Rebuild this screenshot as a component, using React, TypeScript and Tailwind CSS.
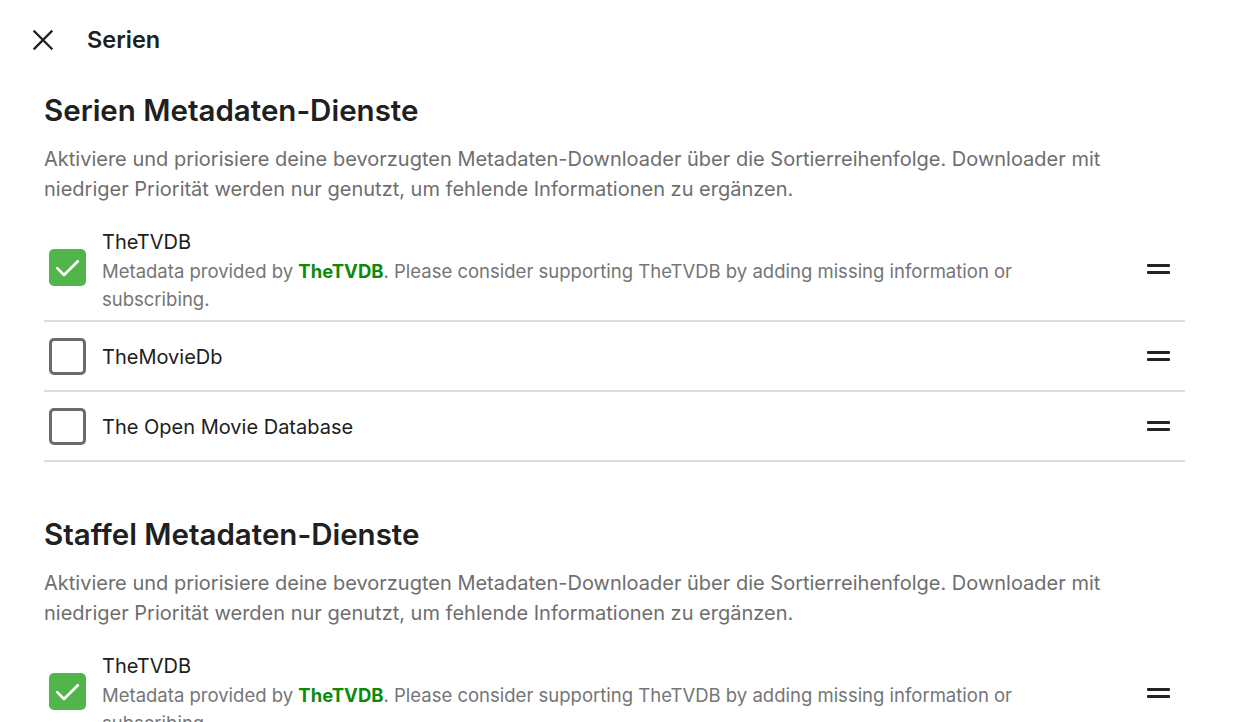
type Provider = { name: string; checked: boolean; tvdb?: boolean }

const PROVIDERS: Provider[] = [
  { name: 'TheTVDB', checked: true, tvdb: true },
  { name: 'TheMovieDb', checked: false },
  { name: 'The Open Movie Database', checked: false },
]

const DESC =
  'Aktiviere und priorisiere deine bevorzugten Metadaten-Downloader über die Sortierreihenfolge. Downloader mit niedriger Priorität werden nur genutzt, um fehlende Informationen zu ergänzen.'

function Checkbox({ checked }: { checked: boolean }) {
  if (checked) {
    return (
      <div className="flex h-[37px] w-[37px] shrink-0 items-center justify-center rounded-[5px] bg-[#52b54b]">
        <svg width="31" height="31" viewBox="0 0 24 24" fill="none" stroke="white" strokeWidth="2.1" strokeLinecap="round" strokeLinejoin="round">
          <path d="M4 12.5l5.3 5.3L20 7.2" />
        </svg>
      </div>
    )
  }
  return <div className="h-[37px] w-[37px] shrink-0 rounded-[5px] border-[3px] border-[#6b6b6b]" />
}

function DragHandle() {
  return (
    <div className="flex w-[23px] shrink-0 flex-col gap-[4px]">
      <div className="h-[3px] w-full rounded-[1px] bg-[#222]" />
      <div className="h-[3px] w-full rounded-[1px] bg-[#222]" />
    </div>
  )
}

function ProviderRow({ p }: { p: Provider }) {
  return (
    <div className="flex min-h-[70px] items-center border-b-2 border-[#dcdcdc] py-[7px]">
      <div className={p.tvdb ? 'mb-[7px] pl-[5px]' : 'pl-[5px]'}>
        <Checkbox checked={p.checked} />
      </div>
      <div className="flex-1 pl-[16px] pr-[110px]">
        <div className={p.tvdb ? 'text-[20px] leading-[29px] text-[#202020]' : 'pt-[3px] text-[20px] leading-[29px] text-[#202020]'}>
          {p.name}
        </div>
        {p.tvdb && (
          <div className="text-[18.5px] leading-[28px] text-[#757575]">
            Metadata provided by <span className="font-bold text-[#0b8a0b]">TheTVDB</span>. Please consider supporting
            TheTVDB by adding missing information or subscribing.
          </div>
        )}
      </div>
      <div className={p.tvdb ? 'mb-[3px] pr-[15px]' : 'pr-[15px]'}>
        <DragHandle />
      </div>
    </div>
  )
}

function Section({ title, items }: { title: string; items: Provider[] }) {
  return (
    <section className="mb-[54px]">
      <h2 className="text-[29.5px] font-semibold leading-[36px] text-[#202020]">{title}</h2>
      <p className="mt-[16px] text-[20px] leading-[30px] text-[#6e6e6e]">{DESC}</p>
      <div className="mt-[17px]">
        {items.map((p) => (
          <ProviderRow key={p.name} p={p} />
        ))}
      </div>
    </section>
  )
}

export default function App() {
  return (
    <div className="h-[722px] overflow-hidden bg-white font-['Inter',sans-serif]">
      <header className="flex h-[80px] items-center pl-[32px]">
        <button aria-label="Schließen" className="flex h-[22px] w-[22px] items-center justify-center text-[#202020]">
          <svg width="22" height="22" viewBox="0 0 22 22" fill="none" stroke="currentColor" strokeWidth="2.3" strokeLinecap="square">
            <path d="M2.5 2.5l17 17M19.5 2.5l-17 17" />
          </svg>
        </button>
        <h1 className="ml-[33px] text-[23.5px] font-semibold text-[#202020]">Serien</h1>
      </header>
      <main className="pl-[44px] pr-[49px] pt-[12px]">
        <Section title="Serien Metadaten-Dienste" items={PROVIDERS} />
        <Section title="Staffel Metadaten-Dienste" items={PROVIDERS.slice(0, 1)} />
      </main>
    </div>
  )
}
